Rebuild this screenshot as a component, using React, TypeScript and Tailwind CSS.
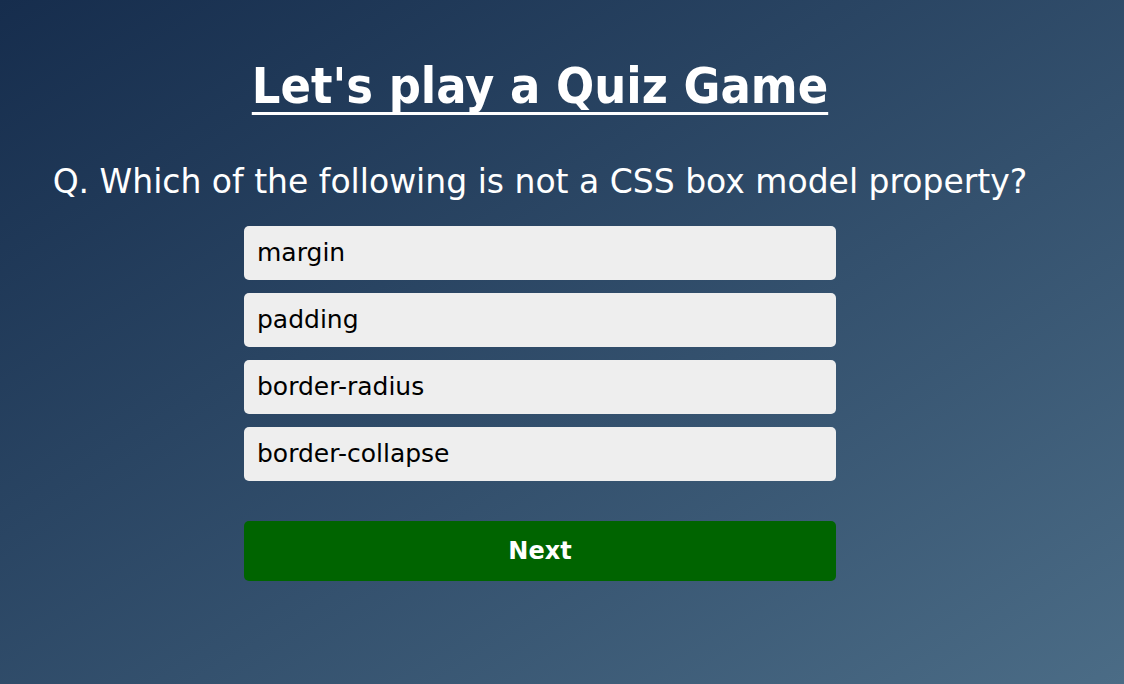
const options = ["margin", "padding", "border-radius", "border-collapse"];

export default function App() {
  return (
    <div className="min-h-[684px] w-full bg-gradient-to-br from-[#162d4d] to-[#4b6c86] font-['DejaVu_Sans',sans-serif]">
      <div className="w-[1080px] pt-[57px] flex flex-col items-center">
        {/* Title */}
        <h1 className="text-[50px] font-bold [font-stretch:condensed] text-white underline decoration-[3px] underline-offset-[9px] [text-decoration-skip-ink:none] leading-[58px]">
          Let's play a Quiz Game
        </h1>

        {/* Question */}
        <h2 className="mt-[45px] text-[33px] text-white leading-[44px]">
          Q. Which of the following is not a CSS box model property?
        </h2>

        <div className="mt-[22px] w-[592px] flex flex-col gap-[13px]">
          {options.map((o) => (
            <div
              key={o}
              className="h-[54px] flex items-center px-[13px] bg-[#eeeeee] rounded-[5px] text-[25px] text-black"
            >
              {o}
            </div>
          ))}
        </div>

        <button className="mt-[40px] w-[592px] h-[60px] bg-[#006400] rounded-[5px] text-white text-[24px] font-bold">
          Next
        </button>
      </div>
    </div>
  );
}
